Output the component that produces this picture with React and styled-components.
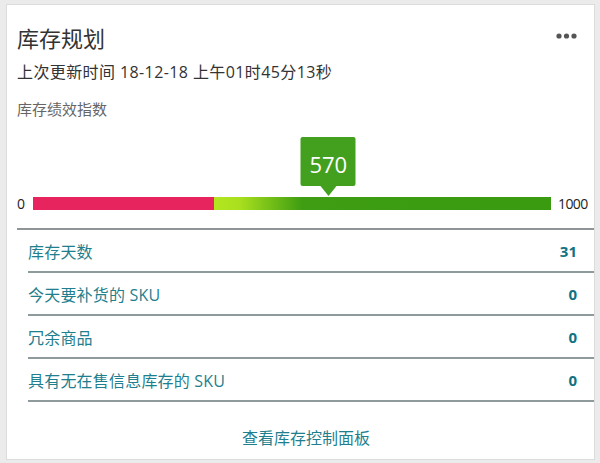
import React from "react";
import styled, { createGlobalStyle } from "styled-components";

const GlobalStyle = createGlobalStyle`
  body {
    margin: 0;
    background: #ebebeb;
    font-family: "Open Sans", "Noto Sans CJK SC", sans-serif;
  }
`;

const Card = styled.section`
  box-sizing: border-box;
  margin: 4px 5px 0 6px;
  height: 456px;
  border: 1px solid #dcdcdc;
  background: #fff;
  padding: 0 17px 0 10px;
  display: flex;
  flex-direction: column;
`;

const Header = styled.div`
  display: flex;
  justify-content: space-between;
  align-items: center;
  padding-top: 18px;
`;

const Title = styled.h1`
  margin: 0;
  font-size: 22px;
  line-height: 30px;
  font-weight: 400;
  color: #333;
`;

const MoreButton = styled.button`
  border: 0;
  background: none;
  padding: 0;
  display: flex;
  cursor: pointer;
  margin-top: -4px;
`;

const Subtitle = styled.div`
  margin-top: 8px;
  font-size: 16px;
  letter-spacing: 0.4px;
  line-height: 22px;
  color: #333;
`;

const GaugeLabel = styled.div`
  margin-top: 16px;
  font-size: 15px;
  line-height: 20px;
  color: #666;
`;

const GaugeRow = styled.div`
  display: flex;
  align-items: center;
  margin-top: 75px;
  margin-right: -17px;
`;

const EndLabel = styled.span`
  width: ${(p) => p.$width}px;
  padding-left: ${(p) => p.$pad || 0}px;
  box-sizing: border-box;
  font-size: 14px;
  letter-spacing: -0.6px;
  color: #222;
`;

const Track = styled.div`
  position: relative;
  flex: 1;
  height: 13px;
  background: linear-gradient(
    to right,
    #e8245f 0%,
    #e8245f 35%,
    #b4e620 35%,
    #a8df1e 40%,
    #3e9d12 52%,
    #3a9b10 100%
  );
`;

const Bubble = styled.div`
  position: absolute;
  bottom: calc(100% + 1px);
  transform: translateX(-50%);
  display: flex;
  flex-direction: column;
  align-items: center;
`;

const BubbleBox = styled.div`
  width: 55px;
  height: 49px;
  border-radius: 2px;
  background: #43a01f;
  color: #fff;
  font-size: 22px;
  display: flex;
  align-items: center;
  justify-content: center;
  padding-top: 4px;
  box-sizing: border-box;
`;

const BubbleArrow = styled.div`
  width: 0;
  height: 0;
  border-left: 8px solid transparent;
  border-right: 8px solid transparent;
  border-top: 10px solid #43a01f;
`;

const Divider = styled.hr`
  margin: 15px -17px 0 0;
  border: 0;
  border-top: 2px solid #8f9597;
`;

const List = styled.ul`
  list-style: none;
  margin: 0 -17px 0 11px;
  padding: 0;
`;

const Row = styled.li`
  display: flex;
  justify-content: space-between;
  align-items: center;
  height: 41px;
  padding-right: 17px;
  border-bottom: 2px solid #8f9a9c;
`;

const RowLabel = styled.span`
  font-size: 16px;
  letter-spacing: 0.2px;
  color: #1f7f8e;
`;

const RowValue = styled.span`
  font-size: 15px;
  font-weight: 700;
  color: #117282;
`;

const Footer = styled.div`
  flex: 1;
  display: flex;
  align-items: center;
  justify-content: center;
  padding: 12px 0 0 18px;
`;

const FooterLink = styled.a`
  font-size: 16px;
  color: #1f7f8e;
  text-decoration: none;
  cursor: pointer;
`;

const rows = [
  { label: "库存天数", value: 31 },
  { label: "今天要补货的 SKU", value: 0 },
  { label: "冗余商品", value: 0 },
  { label: "具有无在售信息库存的 SKU", value: 0 },
];

const score = 570;

export default function App() {
  return (
    <>
      <GlobalStyle />
      <Card>
        <Header>
          <Title>库存规划</Title>
          <MoreButton aria-label="更多">
            <svg width="21" height="6" viewBox="0 0 21 6">
              <circle cx="3" cy="3" r="2.6" fill="#555" />
              <circle cx="10.5" cy="3" r="2.6" fill="#555" />
              <circle cx="18" cy="3" r="2.6" fill="#555" />
            </svg>
          </MoreButton>
        </Header>
        <Subtitle>上次更新时间 18-12-18 上午01时45分13秒</Subtitle>
        <GaugeLabel>库存绩效指数</GaugeLabel>
        <GaugeRow>
          <EndLabel $width={16}>0</EndLabel>
          <Track>
            <Bubble style={{ left: `${(score / 1000) * 100}%` }}>
              <BubbleBox>{score}</BubbleBox>
              <BubbleArrow />
            </Bubble>
          </Track>
          <EndLabel $width={43} $pad={7}>
            1000
          </EndLabel>
        </GaugeRow>
        <Divider />
        <List>
          {rows.map((r) => (
            <Row key={r.label}>
              <RowLabel>{r.label}</RowLabel>
              <RowValue>{r.value}</RowValue>
            </Row>
          ))}
        </List>
        <Footer>
          <FooterLink>查看库存控制面板</FooterLink>
        </Footer>
      </Card>
    </>
  );
}
